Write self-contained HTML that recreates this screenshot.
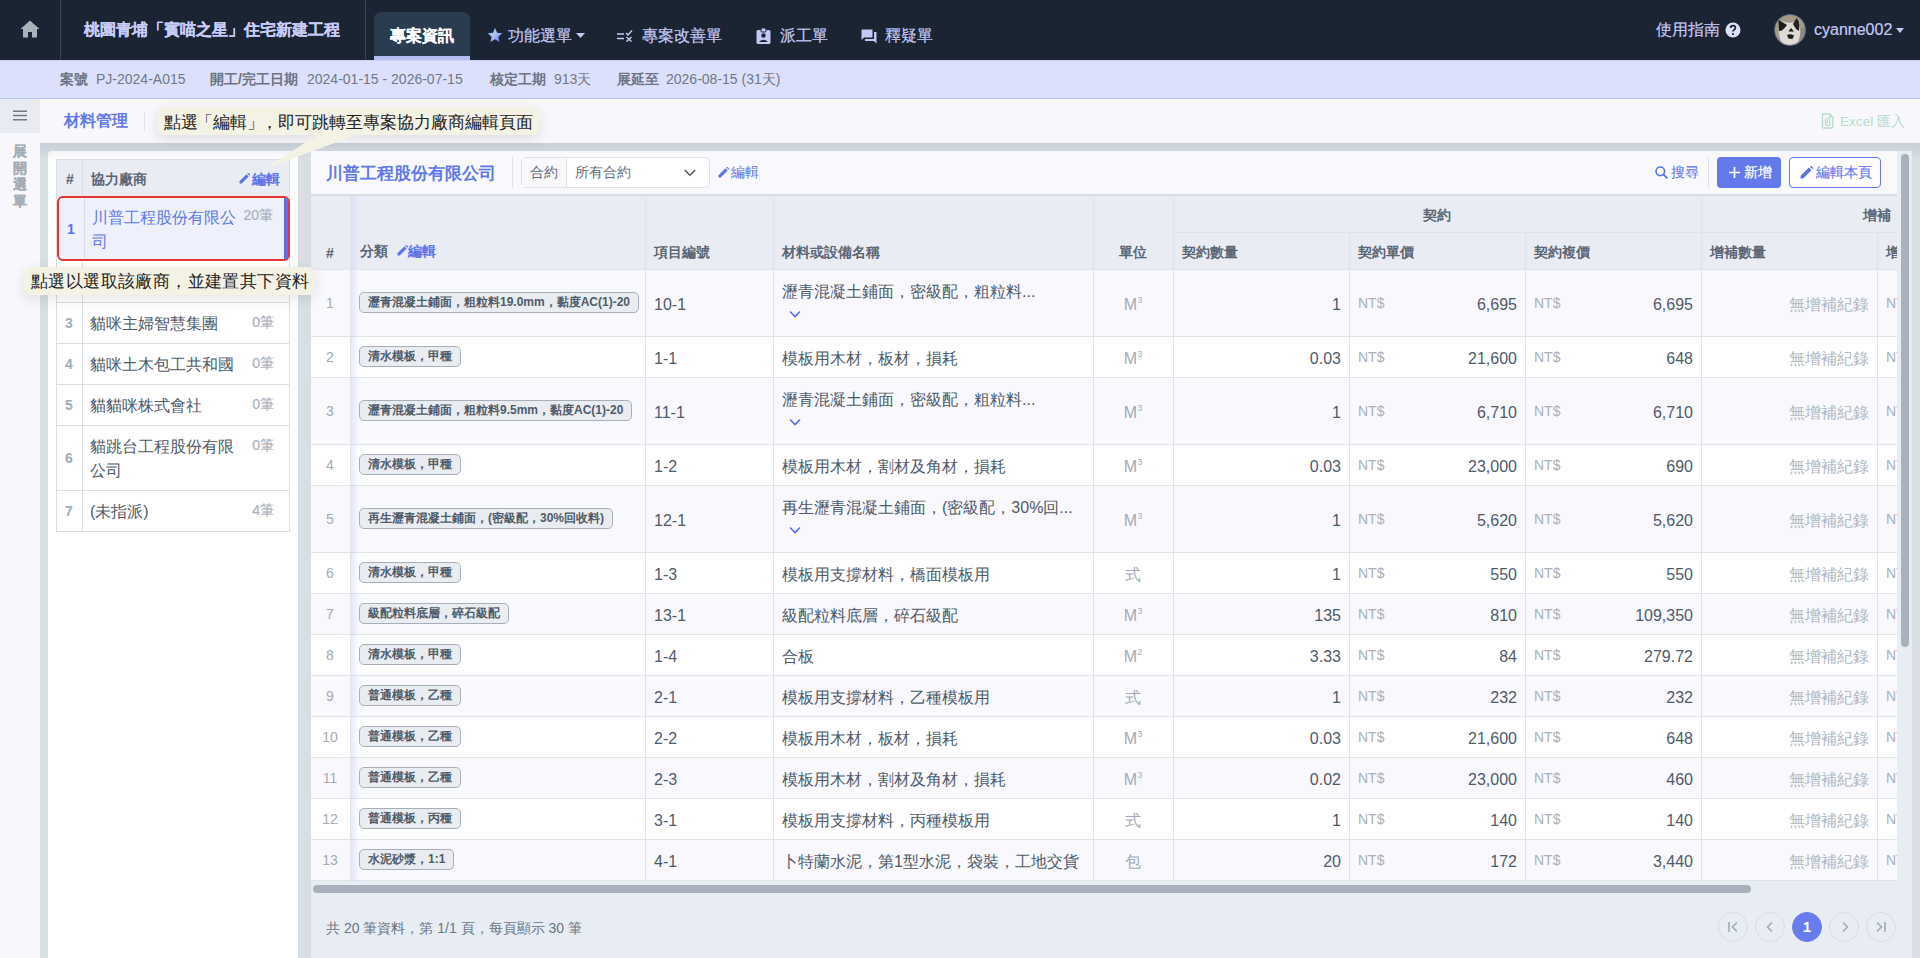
<!DOCTYPE html>
<html><head><meta charset="utf-8">
<style>
*{box-sizing:border-box;margin:0;padding:0}
html,body{width:1920px;height:958px;overflow:hidden;background:#f8f8fc;font-family:"Liberation Sans",sans-serif;color:#4a5565}
.abs{position:absolute}
/* NAV */
#nav{position:absolute;left:0;top:0;width:1920px;height:60px;background:#1b2433}
#nav .div1{position:absolute;left:60px;top:0;width:1px;height:60px;background:#3b4555}
#nav .div2{position:absolute;left:365px;top:0;width:1px;height:60px;background:#3b4555}
#nav .title{position:absolute;left:84px;top:19px;font-size:16px;font-weight:bold;color:#c9ccf6;line-height:22px;white-space:nowrap;-webkit-text-stroke:0.1px #c9ccf6}
#nav .tab{position:absolute;left:374px;top:12px;width:96px;height:48px;background:#2b3c51;border-radius:7px 7px 0 0}
#nav .tab::after{content:"";position:absolute;left:0;bottom:0;width:96px;height:4px;background:#b4bdf1}
#nav .tab span{position:absolute;left:16px;top:13px;font-size:16px;font-weight:bold;color:#fff;line-height:22px;white-space:nowrap;-webkit-text-stroke:0.1px #fff}
#nav .item{position:absolute;top:25px;font-size:16px;color:#c4c8f4;line-height:22px;white-space:nowrap;-webkit-text-stroke:0.2px #c4c8f4}
#nav svg{position:absolute}
/* info */
#info{position:absolute;left:0;top:60px;width:1920px;height:39px;background:#dde0fb;border-top:1px solid #c9cefa;border-bottom:1px solid #b9c0f3}
#info span{position:absolute;top:10px;font-size:14px;line-height:17px;white-space:nowrap}
#info .k{font-weight:bold;color:#6a7482}
#info .v{color:#6f7987}
/* sidebar */
#side{position:absolute;left:0;top:99px;width:40px;height:859px;background:#f8f8fc}
#side .ham{position:absolute;left:0;top:0;width:40px;height:34px;background:#e8ebf2}
#side .ham i{position:absolute;left:13px;width:14px;height:2px;background:#6b7684}
#side .vt{position:absolute;left:12px;top:44px;width:16px;font-size:14px;font-weight:bold;color:#a3abb5;line-height:16.5px;text-align:center;-webkit-text-stroke:0.15px #a3abb5}
/* header */
#hdr .t{position:absolute;left:64px;top:110px;font-size:16px;font-weight:bold;color:#6079ea;line-height:22px}
#hdr .d{position:absolute;left:144px;top:111px;width:1px;height:20px;background:#dfe2e8}
#xlsx{position:absolute;left:1821px;top:113px;font-size:13.6px;color:#b5dcc9;line-height:18px;white-space:nowrap}
/* overlay */
#ov{position:absolute;left:40px;top:143px;width:1880px;height:815px;background:#d8dee4}
#ov::before{content:"";position:absolute;left:0;top:0;width:100%;height:14px;background:linear-gradient(#c9d0d7,#d5dbe1)}
/* left card */
#lc{position:absolute;left:48px;top:151px;width:250px;height:807px;background:linear-gradient(#f2f3f5,#fff 10px);border-radius:4px 4px 0 0}
#lt{position:absolute;left:8px;top:8px;width:234px;height:373px;border:1px solid #d9dee5;border-top:none;z-index:1}
#lth{position:absolute;left:8px;top:8px;width:234px;height:38px;background:#e9ecf3;border:1px solid #d9dee5}
#lth .h1{position:absolute;left:9px;top:11px;font-size:14px;font-weight:bold;color:#5b6776;line-height:17px}
#lth .h2{position:absolute;left:34px;top:11px;font-size:14px;font-weight:bold;color:#5b6776;line-height:17px}
#lth .ed{position:absolute;left:195px;top:11px;font-size:14px;font-weight:bold;color:#5b73e8;line-height:17px;white-space:nowrap}
#lth .vd{position:absolute;left:25px;top:0;width:1px;height:37px;background:#d9dee5}
.srow{position:absolute;left:8px;width:234px;border-bottom:1px solid #d9dee5;background:#fff}
.srow .sn{position:absolute;left:0;top:0;width:27px;height:100%;border-right:1px solid #d9dee5;font-size:14px;color:#a3acb6;display:flex;align-items:center;justify-content:center;font-weight:bold}
.srow .sname{position:absolute;left:34px;top:9px;width:150px;font-size:16px;color:#4f5b6a;line-height:24px}
.srow .scnt{position:absolute;right:16px;top:11px;font-size:14px;color:#a9b1bb;line-height:17px;-webkit-text-stroke:0.2px #a9b1bb}
.srow.sel{z-index:2;background:#eef0fc;border:2px solid #e5343a;border-radius:6px;left:9px;width:233px}
.srow.sel .sn{color:#5b73e8;font-weight:bold;border-right:1px solid #d9dee5;left:-1px}
.srow.sel .sname{color:#6079ea;left:33px;top:8px}
.srow.sel .scnt{top:9px;right:15px}
.srow.sel::after{content:"";position:absolute;right:0;top:0;width:4px;height:100%;background:#5b6fe0;border-radius:0 3px 3px 0}
/* tooltips */
.tip{position:absolute;z-index:5;background:#f4f2e5;border-radius:7px;box-shadow:0 4px 14px rgba(0,0,0,0.10);font-size:17.3px;color:#222;line-height:22px;white-space:nowrap}
/* right card */
#rc{position:absolute;left:310px;top:151px;width:1602px;height:807px;background:#f9f9fd}
#rch{position:absolute;left:0;top:0;width:1587px;height:45px;background:#f9f9fd;border-bottom:2px solid #d9dee5}
#rch .t{position:absolute;left:16px;top:12px;font-size:17px;font-weight:bold;color:#6079ea;line-height:22px;white-space:nowrap}
#rch .d{position:absolute;left:202px;top:6px;width:1px;height:31px;background:#dfe2e8}
#rch .sel{position:absolute;left:211px;top:6px;width:189px;height:31px;border:1px solid #dde1e6;border-radius:5px;background:#fff}
#rch .sel .pre{position:absolute;left:0;top:0;width:45px;height:29px;border-right:1px solid #dde1e6;background:#f9f9fb;font-size:14px;color:#5f6b79;line-height:29px;text-align:center}
#rch .sel .val{position:absolute;left:53px;top:0;font-size:14px;color:#5f6b79;line-height:29px}
#rch .ed{position:absolute;left:409px;top:13px;font-size:14px;color:#5b73e8;line-height:17px;white-space:nowrap}
#rch .srch{position:absolute;left:1345px;top:13px;font-size:14px;color:#5b73e8;line-height:17px;white-space:nowrap}
#rch .d2{position:absolute;left:1398px;top:7px;width:1px;height:30px;background:#dfe2e8}
#rch .add{position:absolute;left:1407px;top:6px;width:64px;height:31px;background:#6479ec;-webkit-text-stroke:0.2px #fff;border-radius:4px;color:#fff;font-size:14px;line-height:31px;text-align:center}
#rch .editp{position:absolute;left:1479px;top:6px;width:92px;height:31px;border:1px solid #6479ec;border-radius:4px;color:#6479ec;-webkit-text-stroke:0.15px #6479ec;font-size:14px;line-height:29px;background:#fff;white-space:nowrap}
#tbl{position:absolute;left:0;top:0;width:1587px;height:735px;overflow:hidden}
.th{position:absolute;background:#e9ecf3}
.thx{position:absolute;font-size:14px;font-weight:bold;color:#5b6776;line-height:17px;white-space:nowrap}
.row{position:absolute;left:0;width:1587px}
.hl{position:absolute;left:0;width:1587px;height:1px;background:#dfe3ea}
.vl{position:absolute;width:1px;background:#dfe3ea}
.num{position:absolute;left:0;width:40px;font-size:14px;color:#a2abb5;display:flex;align-items:center;justify-content:center}
.cell{position:absolute;display:flex;align-items:center;padding:0 9px;white-space:nowrap}
.badge{display:inline-block;height:21px;border:1px solid #a7afba;border-radius:5px;background:#e9ecf0;padding:0 8px;font-size:12px;font-weight:bold;color:#4f5b69;line-height:19px;white-space:nowrap}
.txt{font-size:16px;color:#4f5b6a;padding-top:5px}
.txt2{display:block;font-size:16px;color:#4f5b6a}
.txt2 .nm{position:absolute;left:9px;top:12px;line-height:22px}
.txt2 .chev{position:absolute;left:16px;top:41px}
.unit{justify-content:center;font-size:16px;color:#a2abb5;padding-top:5px}
.unit sup{font-size:8.5px;vertical-align:0;position:relative;top:-5px;margin-left:0.5px}
.numr{justify-content:flex-end;font-size:16px;color:#4f5b6a;padding-right:8px;padding-top:5px}
.nt{position:absolute;left:9px;top:50%;margin-top:-8px;font-size:14px;color:#a9b1bb}
.nt2{position:absolute;left:9px;top:50%;margin-top:-8px;font-size:14px;color:#a9b1bb}
.none{color:#b1b8c1}
#hsb{position:absolute;left:3px;top:734px;width:1438px;height:8px;background:#a9b2bc;border-radius:4px}
#foot{position:absolute;left:0;top:730px;width:1602px;height:77px;background:#e8ecf3}
#foot .t{position:absolute;left:16px;top:38px;font-size:14px;color:#6b7684;line-height:18px;white-space:nowrap}
.pg{position:absolute;top:31px;width:30px;height:30px;border-radius:50%;border:1px solid #d9dde3}
.pg.on{background:#687cee;border-color:#687cee;color:#fff;font-size:15px;font-weight:bold;text-align:center;line-height:28px}
#vtrack{position:absolute;left:1587px;top:0;width:15px;height:744px;background:#e8ecf3}
#vthumb{position:absolute;left:1591px;top:3px;width:8px;height:493px;background:#a9b2bc;border-radius:4px}
</style></head><body>

<div id="nav">
  <svg style="left:20px;top:20px" width="20" height="18" viewBox="0 0 20 18"><path d="M10 0.5 L0.5 9 H3 V17.5 H8 V12 H12 V17.5 H17 V9 H19.5 Z" fill="#a9b1bb"/></svg>
  <div class="div1"></div>
  <div class="title">桃園青埔「賓喵之星」住宅新建工程</div>
  <div class="div2"></div>
  <div class="tab"><span>專案資訊</span></div>
  <svg style="left:487px;top:27px" width="16" height="16" viewBox="0 0 24 24"><defs><linearGradient id="sg" x1="0" y1="0" x2="1" y2="1"><stop offset="0" stop-color="#2fd0e6"/><stop offset="0.45" stop-color="#b9c3f4"/><stop offset="1" stop-color="#5a6ff2"/></linearGradient></defs><path d="M12 1 L15 8.5 L23 9.2 L17 14.5 L18.8 22.5 L12 18.3 L5.2 22.5 L7 14.5 L1 9.2 L9 8.5 Z" fill="url(#sg)"/></svg>
  <div class="item" style="left:508px">功能選單</div>
  <svg style="left:576px;top:33px" width="9" height="5" viewBox="0 0 9 5"><path d="M0 0 H9 L4.5 5 Z" fill="#c4c8f4"/></svg>
  <svg style="left:617px;top:30px" width="16" height="12" viewBox="0 0 16 12"><path d="M0 4 H7 M0 8.5 H7" stroke="#c4c8f4" stroke-width="1.6"/><path d="M9 3 L11 5 L15 0.5" fill="none" stroke="#c4c8f4" stroke-width="1.5"/><path d="M9.5 7 L14.5 11.5 M14.5 7 L9.5 11.5" stroke="#c4c8f4" stroke-width="1.5"/></svg>
  <div class="item" style="left:642px">專案改善單</div>
  <svg style="left:756px;top:28px" width="15" height="16" viewBox="0 0 15 16"><rect x="0.5" y="2" width="14" height="14" rx="1.5" fill="#c4c8f4"/><rect x="5" y="0" width="5" height="4" rx="1" fill="#c4c8f4" stroke="#1b2433" stroke-width="1"/><circle cx="7.5" cy="7.5" r="2.2" fill="#1b2433"/><path d="M3 14 Q7.5 9.5 12 14 Z" fill="#1b2433"/></svg>
  <div class="item" style="left:780px">派工單</div>
  <svg style="left:861px;top:29px" width="16" height="15" viewBox="0 0 16 15"><path d="M0.5 0.5 H11.5 V8.5 H3 L0.5 11 Z" fill="#c4c8f4"/><path d="M13 3 H15.5 V14.5 L13 12 H4 V10 H13 Z" fill="#c4c8f4"/></svg>
  <div class="item" style="left:885px">釋疑單</div>
  <div class="item" style="left:1656px;top:19px">使用指南</div>
  <svg style="left:1725px;top:22px" width="16" height="16" viewBox="0 0 16 16"><circle cx="8" cy="8" r="7.5" fill="#dfe1fb"/><path d="M5.6 6 Q5.6 3.6 8 3.6 Q10.4 3.6 10.4 5.8 Q10.4 7.2 8.9 7.9 Q8 8.4 8 9.6" fill="none" stroke="#1b2433" stroke-width="1.7"/><circle cx="8" cy="12" r="1.1" fill="#1b2433"/></svg>
  <svg style="left:1774px;top:14px" width="32" height="32" viewBox="0 0 32 32"><defs><clipPath id="avc"><circle cx="16" cy="16" r="15.5"/></clipPath><filter id="avb" x="-20%" y="-20%" width="140%" height="140%"><feGaussianBlur stdDeviation="0.7"/></filter></defs><g clip-path="url(#avc)"><rect width="32" height="32" fill="#a39a8b"/><rect x="20" y="14" width="12" height="18" fill="#8f8b84"/><g filter="url(#avb)"><path d="M5 12 Q6 6 10 8 L16 9 L22 7 Q26 6 26 13 Q27 22 24 28 Q16 34 8 29 Q4 22 5 12Z" fill="#dedbd6"/><path d="M4.5 6 Q8 8 11.5 10 L13 11 Q11 14 8 16.5 L5 17Z" fill="#1e1e1e"/><path d="M19 10 L22.5 4 Q25.5 7 25.5 11 L25 17 L22 15 Q20 12 19 10Z" fill="#232323"/><path d="M14.5 17.5 L17 14 L20 17.5 Z" fill="#151515"/><path d="M13 21 Q16 19.5 20 21.5 L18.5 25 L14.5 24.5Z" fill="#1a1a1a"/></g></g><circle cx="16" cy="16" r="15.5" fill="none" stroke="#5d6b7c" stroke-width="0.8"/></svg>
  <div class="item" style="left:1814px;top:19px">cyanne002</div>
  <svg style="left:1896px;top:28px" width="8" height="5" viewBox="0 0 8 5"><path d="M0 0 H8 L4 5 Z" fill="#c4c8f4"/></svg>
</div>

<div id="info">
  <span class="k" style="left:60px">案號</span><span class="v" style="left:96px">PJ-2024-A015</span>
  <span class="k" style="left:210px">開工/完工日期</span><span class="v" style="left:307px">2024-01-15 - 2026-07-15</span>
  <span class="k" style="left:490px">核定工期</span><span class="v" style="left:554px">913天</span>
  <span class="k" style="left:617px">展延至</span><span class="v" style="left:666px">2026-08-15 (31天)</span>
</div>

<div id="side">
  <div class="ham"><svg style="position:absolute;left:13px;top:11px" width="14" height="11" viewBox="0 0 14 11"><path d="M0 1.2 H14 M0 5.5 H14 M0 9.8 H14" stroke="#6f7a88" stroke-width="1.6"/></svg></div>
  <div class="vt">展<br>開<br>選<br>單</div>
</div>

<div id="hdr"><div class="t">材料管理</div><div class="d"></div></div>
<div id="xlsx"><svg style="position:absolute;left:0;top:0px" width="13" height="16" viewBox="0 0 13 16"><path d="M1.5 1 H8.5 L11.8 4.3 V14 Q11.8 15 10.8 15 H2.5 Q1.5 15 1.5 14 Z" fill="none" stroke="#b3dcc8" stroke-width="1.3"/><path d="M8.5 1 V4.3 H11.8" fill="#b3dcc8"/><path d="M4.3 5.5 V10.5 Q4.3 12.6 6.6 12.6 Q8.9 12.6 8.9 10.5 V5.8 Q8.9 4.5 7.6 4.5 Q6.3 4.5 6.3 5.8 V10.2" fill="none" stroke="#b3dcc8" stroke-width="1.1"/></svg><span style="position:absolute;left:19px;top:0">Excel 匯入</span></div>

<div id="ov"></div>

<div id="lc">
  <div id="lt"></div>
  <div id="lth"><div class="vd"></div><div class="h1">#</div><div class="h2">協力廠商</div><div class="ed"><svg style="position:absolute;left:-13px;top:2px" width="11" height="11" viewBox="0 0 11 11"><path d="M0.5 10.5 V8.3 L7.5 1.3 L9.7 3.5 L2.7 10.5 Z M8.3 0.5 L9.2 -0.4 L11.4 1.8 L10.5 2.7Z" fill="#5b73e8"/></svg>編輯</div></div>
  <div class="srow sel" style="top:45px;height:65px"><div class="sn">1</div><div class="sname">川普工程股份有限公司</div><div class="scnt">20筆</div></div>
<div class="srow" style="top:111px;height:41px"><div class="sn">2</div><div class="sname"></div><div class="scnt"></div></div>
<div class="srow" style="top:152px;height:41px"><div class="sn">3</div><div class="sname">貓咪主婦智慧集團</div><div class="scnt">0筆</div></div>
<div class="srow" style="top:193px;height:41px"><div class="sn">4</div><div class="sname">貓咪土木包工共和國</div><div class="scnt">0筆</div></div>
<div class="srow" style="top:234px;height:41px"><div class="sn">5</div><div class="sname">貓貓咪株式會社</div><div class="scnt">0筆</div></div>
<div class="srow" style="top:275px;height:65px"><div class="sn">6</div><div class="sname">貓跳台工程股份有限公司</div><div class="scnt">0筆</div></div>
<div class="srow" style="top:340px;height:41px"><div class="sn">7</div><div class="sname">(未指派)</div><div class="scnt">4筆</div></div>
</div>

<div id="rc">
  <div id="tbl">
    <div class="th" style="left:0;top:44px;width:1587px;height:74px"></div>
    <div class="row" style="top:118px;height:67px;background:#f8f8fd"></div>
<div class="num" style="top:118px;height:67px">1</div>
<div class="cell" style="left:40px;top:118px;height:67px;width:295px"><span class="badge">瀝青混凝土鋪面，粗粒料19.0mm，黏度AC(1)-20</span></div>
<div class="cell txt" style="left:335px;top:118px;height:67px;width:128px">10-1</div>
<div class="cell txt2" style="left:463px;top:118px;height:67px;width:320px"><div class="nm">瀝青混凝土鋪面，密級配，粗粒料...</div><svg class="chev" width="12" height="8" viewBox="0 0 12 8"><path d="M1 1.5 L6 6.5 L11 1.5" fill="none" stroke="#5b6fe6" stroke-width="1.6"/></svg></div>
<div class="cell unit" style="left:783px;top:118px;height:67px;width:80px">M<sup>3</sup></div>
<div class="cell numr" style="left:863px;top:118px;height:67px;width:176px">1</div>
<div class="cell numr" style="left:1039px;top:118px;height:67px;width:176px"><span class="nt">NT$</span>6,695</div>
<div class="cell numr" style="left:1215px;top:118px;height:67px;width:176px"><span class="nt">NT$</span>6,695</div>
<div class="cell numr none" style="left:1391px;top:118px;height:67px;width:176px">無增補紀錄</div>
<div class="cell" style="left:1567px;top:118px;height:67px;width:176px"><span class="nt2">NT$</span></div>
<div class="row" style="top:185px;height:41px;background:#ffffff"></div>
<div class="num" style="top:185px;height:41px">2</div>
<div class="cell" style="left:40px;top:185px;height:41px;width:295px"><span class="badge">清水模板，甲種</span></div>
<div class="cell txt" style="left:335px;top:185px;height:41px;width:128px">1-1</div>
<div class="cell txt" style="left:463px;top:185px;height:41px;width:320px">模板用木材，板材，損耗</div>
<div class="cell unit" style="left:783px;top:185px;height:41px;width:80px">M<sup>3</sup></div>
<div class="cell numr" style="left:863px;top:185px;height:41px;width:176px">0.03</div>
<div class="cell numr" style="left:1039px;top:185px;height:41px;width:176px"><span class="nt">NT$</span>21,600</div>
<div class="cell numr" style="left:1215px;top:185px;height:41px;width:176px"><span class="nt">NT$</span>648</div>
<div class="cell numr none" style="left:1391px;top:185px;height:41px;width:176px">無增補紀錄</div>
<div class="cell" style="left:1567px;top:185px;height:41px;width:176px"><span class="nt2">NT$</span></div>
<div class="row" style="top:226px;height:67px;background:#f8f8fd"></div>
<div class="num" style="top:226px;height:67px">3</div>
<div class="cell" style="left:40px;top:226px;height:67px;width:295px"><span class="badge">瀝青混凝土鋪面，粗粒料9.5mm，黏度AC(1)-20</span></div>
<div class="cell txt" style="left:335px;top:226px;height:67px;width:128px">11-1</div>
<div class="cell txt2" style="left:463px;top:226px;height:67px;width:320px"><div class="nm">瀝青混凝土鋪面，密級配，粗粒料...</div><svg class="chev" width="12" height="8" viewBox="0 0 12 8"><path d="M1 1.5 L6 6.5 L11 1.5" fill="none" stroke="#5b6fe6" stroke-width="1.6"/></svg></div>
<div class="cell unit" style="left:783px;top:226px;height:67px;width:80px">M<sup>3</sup></div>
<div class="cell numr" style="left:863px;top:226px;height:67px;width:176px">1</div>
<div class="cell numr" style="left:1039px;top:226px;height:67px;width:176px"><span class="nt">NT$</span>6,710</div>
<div class="cell numr" style="left:1215px;top:226px;height:67px;width:176px"><span class="nt">NT$</span>6,710</div>
<div class="cell numr none" style="left:1391px;top:226px;height:67px;width:176px">無增補紀錄</div>
<div class="cell" style="left:1567px;top:226px;height:67px;width:176px"><span class="nt2">NT$</span></div>
<div class="row" style="top:293px;height:41px;background:#ffffff"></div>
<div class="num" style="top:293px;height:41px">4</div>
<div class="cell" style="left:40px;top:293px;height:41px;width:295px"><span class="badge">清水模板，甲種</span></div>
<div class="cell txt" style="left:335px;top:293px;height:41px;width:128px">1-2</div>
<div class="cell txt" style="left:463px;top:293px;height:41px;width:320px">模板用木材，割材及角材，損耗</div>
<div class="cell unit" style="left:783px;top:293px;height:41px;width:80px">M<sup>3</sup></div>
<div class="cell numr" style="left:863px;top:293px;height:41px;width:176px">0.03</div>
<div class="cell numr" style="left:1039px;top:293px;height:41px;width:176px"><span class="nt">NT$</span>23,000</div>
<div class="cell numr" style="left:1215px;top:293px;height:41px;width:176px"><span class="nt">NT$</span>690</div>
<div class="cell numr none" style="left:1391px;top:293px;height:41px;width:176px">無增補紀錄</div>
<div class="cell" style="left:1567px;top:293px;height:41px;width:176px"><span class="nt2">NT$</span></div>
<div class="row" style="top:334px;height:67px;background:#f8f8fd"></div>
<div class="num" style="top:334px;height:67px">5</div>
<div class="cell" style="left:40px;top:334px;height:67px;width:295px"><span class="badge">再生瀝青混凝土鋪面，(密級配，30%回收料)</span></div>
<div class="cell txt" style="left:335px;top:334px;height:67px;width:128px">12-1</div>
<div class="cell txt2" style="left:463px;top:334px;height:67px;width:320px"><div class="nm">再生瀝青混凝土鋪面，(密級配，30%回...</div><svg class="chev" width="12" height="8" viewBox="0 0 12 8"><path d="M1 1.5 L6 6.5 L11 1.5" fill="none" stroke="#5b6fe6" stroke-width="1.6"/></svg></div>
<div class="cell unit" style="left:783px;top:334px;height:67px;width:80px">M<sup>3</sup></div>
<div class="cell numr" style="left:863px;top:334px;height:67px;width:176px">1</div>
<div class="cell numr" style="left:1039px;top:334px;height:67px;width:176px"><span class="nt">NT$</span>5,620</div>
<div class="cell numr" style="left:1215px;top:334px;height:67px;width:176px"><span class="nt">NT$</span>5,620</div>
<div class="cell numr none" style="left:1391px;top:334px;height:67px;width:176px">無增補紀錄</div>
<div class="cell" style="left:1567px;top:334px;height:67px;width:176px"><span class="nt2">NT$</span></div>
<div class="row" style="top:401px;height:41px;background:#ffffff"></div>
<div class="num" style="top:401px;height:41px">6</div>
<div class="cell" style="left:40px;top:401px;height:41px;width:295px"><span class="badge">清水模板，甲種</span></div>
<div class="cell txt" style="left:335px;top:401px;height:41px;width:128px">1-3</div>
<div class="cell txt" style="left:463px;top:401px;height:41px;width:320px">模板用支撐材料，橋面模板用</div>
<div class="cell unit" style="left:783px;top:401px;height:41px;width:80px">式</div>
<div class="cell numr" style="left:863px;top:401px;height:41px;width:176px">1</div>
<div class="cell numr" style="left:1039px;top:401px;height:41px;width:176px"><span class="nt">NT$</span>550</div>
<div class="cell numr" style="left:1215px;top:401px;height:41px;width:176px"><span class="nt">NT$</span>550</div>
<div class="cell numr none" style="left:1391px;top:401px;height:41px;width:176px">無增補紀錄</div>
<div class="cell" style="left:1567px;top:401px;height:41px;width:176px"><span class="nt2">NT$</span></div>
<div class="row" style="top:442px;height:41px;background:#f8f8fd"></div>
<div class="num" style="top:442px;height:41px">7</div>
<div class="cell" style="left:40px;top:442px;height:41px;width:295px"><span class="badge">級配粒料底層，碎石級配</span></div>
<div class="cell txt" style="left:335px;top:442px;height:41px;width:128px">13-1</div>
<div class="cell txt" style="left:463px;top:442px;height:41px;width:320px">級配粒料底層，碎石級配</div>
<div class="cell unit" style="left:783px;top:442px;height:41px;width:80px">M<sup>3</sup></div>
<div class="cell numr" style="left:863px;top:442px;height:41px;width:176px">135</div>
<div class="cell numr" style="left:1039px;top:442px;height:41px;width:176px"><span class="nt">NT$</span>810</div>
<div class="cell numr" style="left:1215px;top:442px;height:41px;width:176px"><span class="nt">NT$</span>109,350</div>
<div class="cell numr none" style="left:1391px;top:442px;height:41px;width:176px">無增補紀錄</div>
<div class="cell" style="left:1567px;top:442px;height:41px;width:176px"><span class="nt2">NT$</span></div>
<div class="row" style="top:483px;height:41px;background:#ffffff"></div>
<div class="num" style="top:483px;height:41px">8</div>
<div class="cell" style="left:40px;top:483px;height:41px;width:295px"><span class="badge">清水模板，甲種</span></div>
<div class="cell txt" style="left:335px;top:483px;height:41px;width:128px">1-4</div>
<div class="cell txt" style="left:463px;top:483px;height:41px;width:320px">合板</div>
<div class="cell unit" style="left:783px;top:483px;height:41px;width:80px">M<sup>2</sup></div>
<div class="cell numr" style="left:863px;top:483px;height:41px;width:176px">3.33</div>
<div class="cell numr" style="left:1039px;top:483px;height:41px;width:176px"><span class="nt">NT$</span>84</div>
<div class="cell numr" style="left:1215px;top:483px;height:41px;width:176px"><span class="nt">NT$</span>279.72</div>
<div class="cell numr none" style="left:1391px;top:483px;height:41px;width:176px">無增補紀錄</div>
<div class="cell" style="left:1567px;top:483px;height:41px;width:176px"><span class="nt2">NT$</span></div>
<div class="row" style="top:524px;height:41px;background:#f8f8fd"></div>
<div class="num" style="top:524px;height:41px">9</div>
<div class="cell" style="left:40px;top:524px;height:41px;width:295px"><span class="badge">普通模板，乙種</span></div>
<div class="cell txt" style="left:335px;top:524px;height:41px;width:128px">2-1</div>
<div class="cell txt" style="left:463px;top:524px;height:41px;width:320px">模板用支撐材料，乙種模板用</div>
<div class="cell unit" style="left:783px;top:524px;height:41px;width:80px">式</div>
<div class="cell numr" style="left:863px;top:524px;height:41px;width:176px">1</div>
<div class="cell numr" style="left:1039px;top:524px;height:41px;width:176px"><span class="nt">NT$</span>232</div>
<div class="cell numr" style="left:1215px;top:524px;height:41px;width:176px"><span class="nt">NT$</span>232</div>
<div class="cell numr none" style="left:1391px;top:524px;height:41px;width:176px">無增補紀錄</div>
<div class="cell" style="left:1567px;top:524px;height:41px;width:176px"><span class="nt2">NT$</span></div>
<div class="row" style="top:565px;height:41px;background:#ffffff"></div>
<div class="num" style="top:565px;height:41px">10</div>
<div class="cell" style="left:40px;top:565px;height:41px;width:295px"><span class="badge">普通模板，乙種</span></div>
<div class="cell txt" style="left:335px;top:565px;height:41px;width:128px">2-2</div>
<div class="cell txt" style="left:463px;top:565px;height:41px;width:320px">模板用木材，板材，損耗</div>
<div class="cell unit" style="left:783px;top:565px;height:41px;width:80px">M<sup>3</sup></div>
<div class="cell numr" style="left:863px;top:565px;height:41px;width:176px">0.03</div>
<div class="cell numr" style="left:1039px;top:565px;height:41px;width:176px"><span class="nt">NT$</span>21,600</div>
<div class="cell numr" style="left:1215px;top:565px;height:41px;width:176px"><span class="nt">NT$</span>648</div>
<div class="cell numr none" style="left:1391px;top:565px;height:41px;width:176px">無增補紀錄</div>
<div class="cell" style="left:1567px;top:565px;height:41px;width:176px"><span class="nt2">NT$</span></div>
<div class="row" style="top:606px;height:41px;background:#f8f8fd"></div>
<div class="num" style="top:606px;height:41px">11</div>
<div class="cell" style="left:40px;top:606px;height:41px;width:295px"><span class="badge">普通模板，乙種</span></div>
<div class="cell txt" style="left:335px;top:606px;height:41px;width:128px">2-3</div>
<div class="cell txt" style="left:463px;top:606px;height:41px;width:320px">模板用木材，割材及角材，損耗</div>
<div class="cell unit" style="left:783px;top:606px;height:41px;width:80px">M<sup>3</sup></div>
<div class="cell numr" style="left:863px;top:606px;height:41px;width:176px">0.02</div>
<div class="cell numr" style="left:1039px;top:606px;height:41px;width:176px"><span class="nt">NT$</span>23,000</div>
<div class="cell numr" style="left:1215px;top:606px;height:41px;width:176px"><span class="nt">NT$</span>460</div>
<div class="cell numr none" style="left:1391px;top:606px;height:41px;width:176px">無增補紀錄</div>
<div class="cell" style="left:1567px;top:606px;height:41px;width:176px"><span class="nt2">NT$</span></div>
<div class="row" style="top:647px;height:41px;background:#ffffff"></div>
<div class="num" style="top:647px;height:41px">12</div>
<div class="cell" style="left:40px;top:647px;height:41px;width:295px"><span class="badge">普通模板，丙種</span></div>
<div class="cell txt" style="left:335px;top:647px;height:41px;width:128px">3-1</div>
<div class="cell txt" style="left:463px;top:647px;height:41px;width:320px">模板用支撐材料，丙種模板用</div>
<div class="cell unit" style="left:783px;top:647px;height:41px;width:80px">式</div>
<div class="cell numr" style="left:863px;top:647px;height:41px;width:176px">1</div>
<div class="cell numr" style="left:1039px;top:647px;height:41px;width:176px"><span class="nt">NT$</span>140</div>
<div class="cell numr" style="left:1215px;top:647px;height:41px;width:176px"><span class="nt">NT$</span>140</div>
<div class="cell numr none" style="left:1391px;top:647px;height:41px;width:176px">無增補紀錄</div>
<div class="cell" style="left:1567px;top:647px;height:41px;width:176px"><span class="nt2">NT$</span></div>
<div class="row" style="top:688px;height:41px;background:#f8f8fd"></div>
<div class="num" style="top:688px;height:41px">13</div>
<div class="cell" style="left:40px;top:688px;height:41px;width:295px"><span class="badge">水泥砂漿，1:1</span></div>
<div class="cell txt" style="left:335px;top:688px;height:41px;width:128px">4-1</div>
<div class="cell txt" style="left:463px;top:688px;height:41px;width:320px">卜特蘭水泥，第1型水泥，袋裝，工地交貨</div>
<div class="cell unit" style="left:783px;top:688px;height:41px;width:80px">包</div>
<div class="cell numr" style="left:863px;top:688px;height:41px;width:176px">20</div>
<div class="cell numr" style="left:1039px;top:688px;height:41px;width:176px"><span class="nt">NT$</span>172</div>
<div class="cell numr" style="left:1215px;top:688px;height:41px;width:176px"><span class="nt">NT$</span>3,440</div>
<div class="cell numr none" style="left:1391px;top:688px;height:41px;width:176px">無增補紀錄</div>
<div class="cell" style="left:1567px;top:688px;height:41px;width:176px"><span class="nt2">NT$</span></div>
    <div class="hl" style="top:118px"></div><div class="hl" style="top:185px"></div><div class="hl" style="top:226px"></div><div class="hl" style="top:293px"></div><div class="hl" style="top:334px"></div><div class="hl" style="top:401px"></div><div class="hl" style="top:442px"></div><div class="hl" style="top:483px"></div><div class="hl" style="top:524px"></div><div class="hl" style="top:565px"></div><div class="hl" style="top:606px"></div><div class="hl" style="top:647px"></div><div class="hl" style="top:688px"></div><div class="hl" style="top:729px"></div>
    <div class="vl" style="left:40px;top:44px;height:685px"></div><div class="vl" style="left:335px;top:44px;height:685px"></div><div class="vl" style="left:463px;top:44px;height:685px"></div><div class="vl" style="left:783px;top:44px;height:685px"></div><div class="vl" style="left:863px;top:44px;height:685px"></div><div class="vl" style="left:1039px;top:81px;height:648px"></div><div class="vl" style="left:1215px;top:81px;height:648px"></div><div class="vl" style="left:1391px;top:44px;height:685px"></div><div class="vl" style="left:1567px;top:81px;height:648px"></div>
    <div class="hl" style="top:81px;left:863px;width:724px"></div>
    <div class="thx" style="left:16px;top:94px">#</div>
    <div class="thx" style="left:50px;top:92px">分類</div>
    <div class="thx" style="left:98px;top:92px;font-weight:normal;color:#5b73e8;font-weight:bold"><svg style="position:absolute;left:-11px;top:2px" width="11" height="11" viewBox="0 0 11 11"><path d="M0.5 10.5 V8.3 L7.5 1.3 L9.7 3.5 L2.7 10.5 Z M8.3 0.5 L9.2 -0.4 L11.4 1.8 L10.5 2.7Z" fill="#5b73e8"/></svg>編輯</div>
    <div class="thx" style="left:344px;top:93px">項目編號</div>
    <div class="thx" style="left:472px;top:93px">材料或設備名稱</div>
    <div class="thx" style="left:809px;top:93px">單位</div>
    <div class="thx" style="left:872px;top:93px">契約數量</div>
    <div class="thx" style="left:1048px;top:93px">契約單價</div>
    <div class="thx" style="left:1224px;top:93px">契約複價</div>
    <div class="thx" style="left:1400px;top:93px">增補數量</div>
    <div class="thx" style="left:1576px;top:93px">增補</div>
    <div class="thx" style="left:1113px;top:56px">契約</div>
    <div class="thx" style="left:1553px;top:56px">增補</div>
  </div>
  <div id="rch">
    <div class="t">川普工程股份有限公司</div>
    <div class="d"></div>
    <div class="sel"><div class="pre">合約</div><div class="val">所有合約</div><svg style="position:absolute;left:162px;top:11px" width="12" height="8" viewBox="0 0 12 8"><path d="M0.8 1 L6 6.2 L11.2 1" fill="none" stroke="#4a5565" stroke-width="1.5"/></svg></div>
    <div class="ed"><svg style="position:absolute;left:-1px;top:3px" width="11" height="11" viewBox="0 0 11 11"><path d="M0.5 10.5 V8.3 L7.5 1.3 L9.7 3.5 L2.7 10.5 Z M8.3 0.5 L9.2 -0.4 L11.4 1.8 L10.5 2.7Z" fill="#5b73e8"/></svg><span style="margin-left:12px">編輯</span></div>
    <div class="srch"><svg style="position:absolute;left:0;top:2px" width="13" height="13" viewBox="0 0 13 13"><circle cx="5.3" cy="5.3" r="4.3" fill="none" stroke="#5b73e8" stroke-width="1.6"/><path d="M8.4 8.4 L12.3 12.3" stroke="#5b73e8" stroke-width="1.8"/></svg><span style="margin-left:16px">搜尋</span></div>
    <div class="d2"></div>
    <div class="add"><svg style="position:absolute;left:12px;top:10px" width="11" height="11" viewBox="0 0 11 11"><path d="M5.5 0 V11 M0 5.5 H11" stroke="#fff" stroke-width="1.7"/></svg><span style="position:absolute;left:27px;top:0">新增</span></div>
    <div class="editp"><svg style="position:absolute;left:10px;top:8px" width="13" height="13" viewBox="0 0 11 11"><path d="M0.5 10.5 V8.3 L7.5 1.3 L9.7 3.5 L2.7 10.5 Z M8.3 0.5 L9.2 -0.4 L11.4 1.8 L10.5 2.7Z" fill="#5b73e8"/></svg><span style="position:absolute;left:26px;top:0">編輯本頁</span></div>
  </div>
  <div id="foot">
    <div class="t">共 20 筆資料，第 1/1 頁，每頁顯示 30 筆</div>
    <div class="pg" style="left:1408px"><svg style="position:absolute;left:8px;top:8px" width="12" height="12" viewBox="0 0 12 12"><path d="M2 1 V11" stroke="#a2abb5" stroke-width="1.6"/><path d="M10 1.5 L5.5 6 L10 10.5" fill="none" stroke="#a2abb5" stroke-width="1.6"/></svg></div>
    <div class="pg" style="left:1445px"><svg style="position:absolute;left:8px;top:8px" width="12" height="12" viewBox="0 0 12 12"><path d="M8 1.5 L3.5 6 L8 10.5" fill="none" stroke="#a2abb5" stroke-width="1.6"/></svg></div>
    <div class="pg on" style="left:1482px">1</div>
    <div class="pg" style="left:1519px"><svg style="position:absolute;left:9px;top:8px" width="12" height="12" viewBox="0 0 12 12"><path d="M4 1.5 L8.5 6 L4 10.5" fill="none" stroke="#a2abb5" stroke-width="1.6"/></svg></div>
    <div class="pg" style="left:1556px"><svg style="position:absolute;left:8px;top:8px" width="12" height="12" viewBox="0 0 12 12"><path d="M2 1.5 L6.5 6 L2 10.5" fill="none" stroke="#a2abb5" stroke-width="1.6"/><path d="M10 1 V11" stroke="#a2abb5" stroke-width="1.6"/></svg></div>
  </div>
  <div id="hsb"></div>
  <div id="vtrack"></div>
  <div style="position:absolute;left:0;top:0;width:1px;height:807px;background:#d8dee4;z-index:3"></div>
  <div style="position:absolute;left:41px;top:45px;width:8px;height:685px;background:linear-gradient(90deg,rgba(200,208,245,0.45),rgba(200,208,245,0));z-index:3"></div>
  <div id="vthumb"></div>
</div>

<div class="tip" style="left:157px;top:107px;width:383px;height:28px;padding:4px 0 0 7px">點選<span style="margin-left:-2.5px">「</span>編輯<span style="margin-right:-2.5px">」</span>，即可跳轉至專案協力廠商編輯頁面</div>
<svg class="abs" style="left:260px;top:133px;z-index:5" width="110" height="40" viewBox="260 133 110 40"><path d="M319 134 L359 134 L264 169 Z" fill="#f4f2e5"/></svg>
<div class="tip" style="left:24px;top:267px;width:291px;height:28px;padding:3px 0 0 7px;letter-spacing:0.4px">點選以選取該廠商，並建置其下資料</div>

</body></html>
